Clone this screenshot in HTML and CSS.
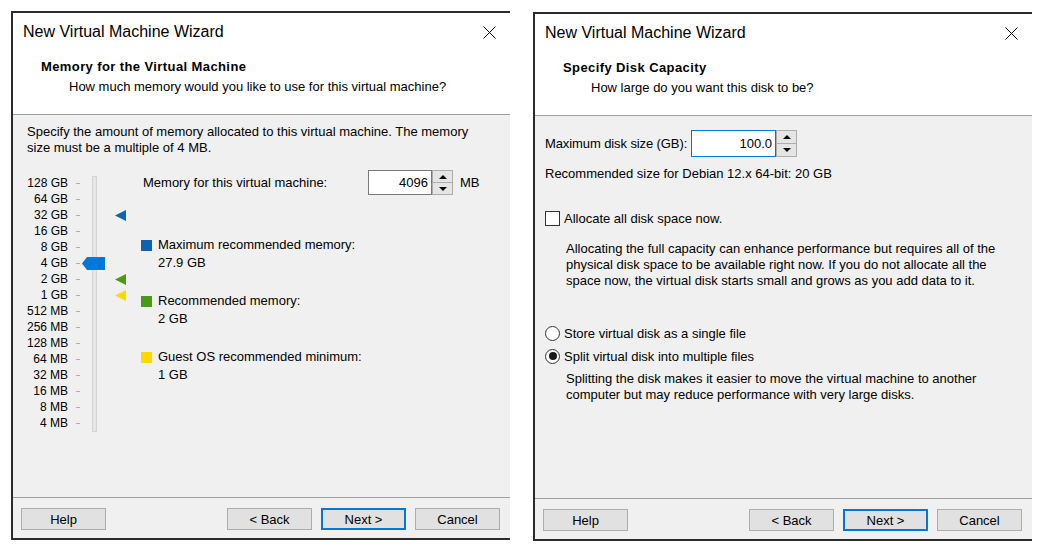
FILE: index.html
```html
<!DOCTYPE html>
<html lang="en">
<head>
<meta charset="utf-8">
<title>New Virtual Machine Wizard</title>
<link rel="stylesheet" href="styles.css">
</head>
<body>
<div class="screen">
  <section class="dlg">
    <header class="dlg-head">
      <div class="titlebar">
        <span class="title">New Virtual Machine Wizard</span>
        <svg class="close" width="13" height="13" viewBox="0 0 13 13"><path d="M0.5 0.5 L12.5 12.5 M12.5 0.5 L0.5 12.5" stroke="#000" stroke-width="1" fill="none"/></svg>
      </div>
      <div class="heading">Memory for the Virtual Machine</div>
      <div class="subheading">How much memory would you like to use for this virtual machine?</div>
    </header>
    <main class="dlg-body mem-body">
      <p class="intro">Specify the amount of memory allocated to this virtual machine. The memory<br>size must be a multiple of 4 MB.</p>
      <div class="mem-main">
        <div class="slider">
          <div class="track"></div>
          <div class="srow"><span class="slabel">128 GB</span><span class="stick"></span><span class="scell"></span><span class="smark"></span></div>
          <div class="srow"><span class="slabel">64 GB</span><span class="stick"></span><span class="scell"></span><span class="smark"></span></div>
          <div class="srow"><span class="slabel">32 GB</span><span class="stick"></span><span class="scell"></span><span class="smark"><svg width="11" height="11" viewBox="0 0 11 11"><polygon points="0,5.5 11,0 11,11" fill="#0f62ae"/></svg></span></div>
          <div class="srow"><span class="slabel">16 GB</span><span class="stick"></span><span class="scell"></span><span class="smark"></span></div>
          <div class="srow"><span class="slabel">8 GB</span><span class="stick"></span><span class="scell"></span><span class="smark"></span></div>
          <div class="srow"><span class="slabel">4 GB</span><span class="stick"></span><span class="scell"><svg class="thumb" width="23" height="13" viewBox="0 0 23 13"><polygon points="0,6.5 5,0 23,0 23,13 5,13" fill="#0078d7"/></svg></span><span class="smark"></span></div>
          <div class="srow"><span class="slabel">2 GB</span><span class="stick"></span><span class="scell"></span><span class="smark"><svg width="11" height="11" viewBox="0 0 11 11"><polygon points="0,5.5 11,0 11,11" fill="#4b9a16"/></svg></span></div>
          <div class="srow"><span class="slabel">1 GB</span><span class="stick"></span><span class="scell"></span><span class="smark"><svg width="11" height="11" viewBox="0 0 11 11"><polygon points="0,5.5 11,0 11,11" fill="#ffd800"/></svg></span></div>
          <div class="srow"><span class="slabel">512 MB</span><span class="stick"></span><span class="scell"></span><span class="smark"></span></div>
          <div class="srow"><span class="slabel">256 MB</span><span class="stick"></span><span class="scell"></span><span class="smark"></span></div>
          <div class="srow"><span class="slabel">128 MB</span><span class="stick"></span><span class="scell"></span><span class="smark"></span></div>
          <div class="srow"><span class="slabel">64 MB</span><span class="stick"></span><span class="scell"></span><span class="smark"></span></div>
          <div class="srow"><span class="slabel">32 MB</span><span class="stick"></span><span class="scell"></span><span class="smark"></span></div>
          <div class="srow"><span class="slabel">16 MB</span><span class="stick"></span><span class="scell"></span><span class="smark"></span></div>
          <div class="srow"><span class="slabel">8 MB</span><span class="stick"></span><span class="scell"></span><span class="smark"></span></div>
          <div class="srow"><span class="slabel">4 MB</span><span class="stick"></span><span class="scell"></span><span class="smark"></span></div>
        </div>
        <div class="mem-side">
          <div class="mem-row">
            <span class="mem-label">Memory for this virtual machine:</span>
            <div class="spin spin-mem">
              <div class="field">4096</div>
              <div class="spinbtns"><span class="sb"><i class="up"></i></span><span class="sb"><i class="down"></i></span></div>
            </div>
            <span class="unit">MB</span>
          </div>
          <div class="legend">
            <div class="legend-item"><span class="sw sw-blue"></span><div>Maximum recommended memory:<br>27.9 GB</div></div>
            <div class="legend-item"><span class="sw sw-green"></span><div>Recommended memory:<br>2 GB</div></div>
            <div class="legend-item"><span class="sw sw-yellow"></span><div>Guest OS recommended minimum:<br>1 GB</div></div>
          </div>
        </div>
      </div>
    </main>
    <footer class="dlg-foot">
      <button class="btn btn-help">Help</button>
      <button class="btn">&lt; Back</button>
      <button class="btn btn-default">Next &gt;</button>
      <button class="btn">Cancel</button>
    </footer>
  </section>

  <section class="dlg dlg-disk">
    <header class="dlg-head">
      <div class="titlebar">
        <span class="title">New Virtual Machine Wizard</span>
        <svg class="close" width="13" height="13" viewBox="0 0 13 13"><path d="M0.5 0.5 L12.5 12.5 M12.5 0.5 L0.5 12.5" stroke="#000" stroke-width="1" fill="none"/></svg>
      </div>
      <div class="heading">Specify Disk Capacity</div>
      <div class="subheading">How large do you want this disk to be?</div>
    </header>
    <main class="dlg-body disk-body">
      <div class="disk-row">
        <span class="disk-label">Maximum disk size (GB):</span>
        <div class="spin spin-disk">
          <div class="field field-focus">100.0</div>
          <div class="spinbtns"><span class="sb"><i class="up"></i></span><span class="sb"><i class="down"></i></span></div>
        </div>
      </div>
      <div class="rec">Recommended size for Debian 12.x 64-bit: 20 GB</div>
      <div class="check-row"><span class="checkbox"></span><span>Allocate all disk space now.</span></div>
      <p class="note note-alloc">Allocating the full capacity can enhance performance but requires all of the<br>physical disk space to be available right now. If you do not allocate all the<br>space now, the virtual disk starts small and grows as you add data to it.</p>
      <div class="radio-row radio-first"><span class="radio"></span><span>Store virtual disk as a single file</span></div>
      <div class="radio-row radio-second"><span class="radio radio-on"></span><span>Split virtual disk into multiple files</span></div>
      <p class="note note-split">Splitting the disk makes it easier to move the virtual machine to another<br>computer but may reduce performance with very large disks.</p>
    </main>
    <footer class="dlg-foot">
      <button class="btn btn-help">Help</button>
      <button class="btn">&lt; Back</button>
      <button class="btn btn-default">Next &gt;</button>
      <button class="btn">Cancel</button>
    </footer>
  </section>
</div>
</body>
</html>
```

FILE: styles.css
```css
html, body {
  margin: 0;
  background: #ffffff;
}
body {
  font-family: "Liberation Sans", Arial, sans-serif;
  font-size: 13px;
  color: #000000;
}
.screen {
  display: flex;
  align-items: flex-start;
  gap: 23px;
  padding: 11px 0 0 11px;
}
.dlg {
  width: 499px;
  height: 529px;
  box-sizing: border-box;
  border: 2px solid #2b2b2b;
  border-right: none;
  background: #f0f0f0;
  display: flex;
  flex-direction: column;
}
.dlg-disk {
  margin-top: 1px;
}
.dlg-head {
  flex: none;
  height: 102px;
  box-sizing: border-box;
  background: #ffffff;
  border-bottom: 1px solid #a0a0a0;
}
.titlebar {
  height: 36px;
  box-sizing: border-box;
  display: flex;
  align-items: center;
  justify-content: space-between;
  padding: 2px 14px 0 10px;
}
.title {
  font-size: 16px;
  color: #000;
}
.close {
  display: block;
}
.heading {
  margin-top: 10px;
  padding-left: 28px;
  line-height: 16px;
  font-weight: bold;
  font-size: 13px;
  letter-spacing: 0.4px;
}
.subheading {
  margin-top: 4px;
  padding-left: 56px;
  line-height: 16px;
}
.dlg-body {
  flex: 1;
  box-sizing: border-box;
}
.mem-body {
  padding: 9px 10px 0 14px;
}
.intro {
  margin: 0;
  line-height: 16px;
  white-space: nowrap;
}
.mem-main {
  display: flex;
  margin-top: 14px;
}
.slider {
  position: relative;
  flex: none;
  width: 99px;
  padding-top: 5px;
}
.track {
  position: absolute;
  left: 65px;
  top: 6px;
  width: 5px;
  height: 256px;
  box-sizing: border-box;
  border: 1px solid #d4d4d4;
  background: #e6e6e6;
}
.srow {
  display: flex;
  align-items: center;
  height: 16px;
}
.slabel {
  width: 41px;
  text-align: right;
  white-space: nowrap;
  font-size: 12px;
}
.stick {
  width: 4px;
  height: 1px;
  margin-left: 8px;
  background: #b0b0b0;
}
.scell {
  position: relative;
  z-index: 1;
  width: 35px;
  height: 16px;
  display: flex;
  align-items: center;
}
.thumb {
  display: block;
  margin-left: 2px;
}
.smark {
  width: 11px;
  height: 11px;
}
.smark svg {
  display: block;
}
.mem-side {
  flex: 1;
  margin-left: 17px;
}
.mem-row {
  display: flex;
  align-items: center;
  height: 25px;
}
.mem-label {
  width: 225px;
  white-space: nowrap;
}
.spin {
  display: flex;
}
.spin-mem {
  height: 25px;
}
.spin-mem .field {
  width: 64px;
}
.spin-disk {
  height: 27px;
}
.spin-disk .field {
  width: 85px;
}
.field {
  box-sizing: border-box;
  height: 100%;
  background: #ffffff;
  border: 1px solid #7a7a7a;
  padding-right: 3px;
  display: flex;
  align-items: center;
  justify-content: flex-end;
}
.field-focus {
  border-color: #0078d7;
}
.spinbtns {
  width: 21px;
  box-sizing: border-box;
  border: 1px solid #adadad;
  display: flex;
  flex-direction: column;
  background: #adadad;
  gap: 1px;
}
.sb {
  flex: 1;
  background: #e5e5e5;
  display: flex;
  align-items: center;
  justify-content: center;
}
.up, .down {
  width: 0;
  height: 0;
  border-left: 4px solid transparent;
  border-right: 4px solid transparent;
}
.up {
  border-bottom: 4px solid #000;
}
.down {
  border-top: 4px solid #000;
}
.unit {
  margin-left: 7px;
}
.legend {
  margin-top: 41px;
  margin-left: -2px;
  display: flex;
  flex-direction: column;
  gap: 20px;
}
.legend-item {
  display: flex;
  line-height: 18px;
}
.sw {
  flex: none;
  width: 11px;
  height: 11px;
  margin: 4px 6px 0 0;
}
.sw-blue { background: #0f62ae; }
.sw-green { background: #4b9a16; }
.sw-yellow { background: #ffd800; }

.disk-body {
  padding: 14px 10px 0 10px;
}
.disk-row {
  display: flex;
  align-items: center;
}
.disk-label {
  width: 146px;
  white-space: nowrap;
  letter-spacing: -0.1px;
}
.rec {
  margin-top: 9px;
  line-height: 16px;
}
.check-row, .radio-row {
  display: flex;
  align-items: center;
  height: 16px;
  gap: 4px;
}
.check-row {
  margin-top: 28px;
}
.checkbox {
  width: 15px;
  height: 15px;
  box-sizing: border-box;
  border: 1px solid #333333;
  background: #ffffff;
}
.note {
  margin: 0;
  padding-left: 21px;
  line-height: 16px;
  white-space: nowrap;
}
.note-alloc {
  margin-top: 15px;
}
.radio-first {
  margin-top: 36px;
}
.radio-second {
  margin-top: 7px;
}
.radio {
  width: 15px;
  height: 15px;
  box-sizing: border-box;
  border: 1px solid #333333;
  border-radius: 50%;
  background: #ffffff;
  display: flex;
  align-items: center;
  justify-content: center;
}
.radio-on::after {
  content: "";
  width: 8px;
  height: 8px;
  border-radius: 50%;
  background: #1a1a1a;
}
.note-split {
  margin-top: 7px;
}

.dlg-foot {
  flex: none;
  height: 41px;
  box-sizing: border-box;
  border-top: 1px solid #a0a0a0;
  display: flex;
  gap: 9px;
  padding: 10px 10px 0 8px;
}
.btn {
  width: 85px;
  height: 22px;
  box-sizing: border-box;
  margin: 0;
  padding: 0;
  border: 1px solid #adadad;
  background: #e1e1e1;
  font-family: "Liberation Sans", Arial, sans-serif;
  font-size: 13px;
  color: #000;
}
.btn-help {
  margin-right: auto;
}
.btn-default {
  border: 2px solid #0078d7;
}
```
